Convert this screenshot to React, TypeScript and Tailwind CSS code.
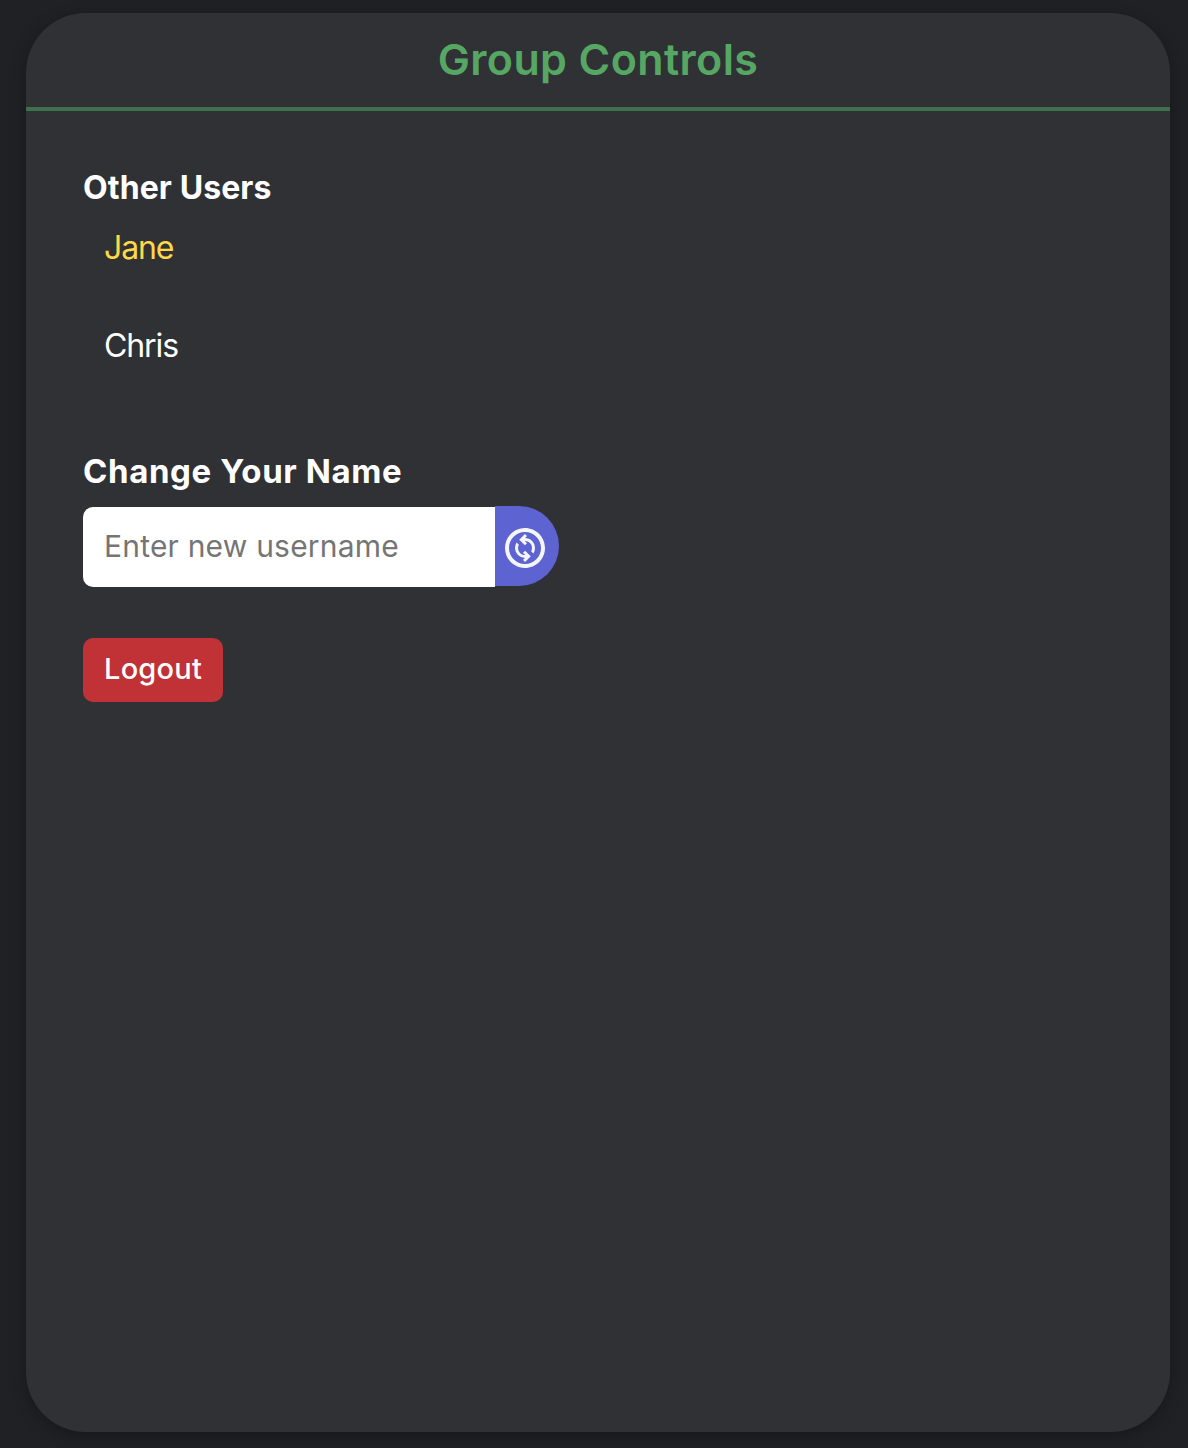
import { MdOutlineChangeCircle } from "react-icons/md";

const users = [
  { name: "Jane", color: "text-[#fdd848]" },
  { name: "Chris", color: "text-white" },
];

export default function App() {
  return (
    <div className="h-[1448px] w-full bg-[#202125] pt-[13px] pr-[18px] pb-4 pl-[26px] font-['Inter',sans-serif]">
      <main className="h-full overflow-hidden rounded-[60px] bg-[#303135] shadow-[0_4px_16px_rgba(0,0,0,0.3)]">
        <header className="flex h-[98px] justify-center border-b-4 border-[#3f704b] pt-4">
          <h1 className="h-[60px] text-[43px] leading-[60px] font-semibold tracking-[0.4px] whitespace-nowrap text-[#56a764]">Group Controls</h1>
        </header>
        <div className="pt-[53px] pl-[57px]">
          <h2 className="h-12 text-[32px] leading-[48px] font-bold tracking-[0.1px] whitespace-nowrap text-white">Other Users</h2>
          <ul className="pl-[21px]">
            {users.map((user) => (
              <li key={user.name} className={`h-[98px] text-[32px] leading-[72px] tracking-[-1.1px] ${user.color}`}>
                {user.name}
              </li>
            ))}
          </ul>
          <h2 className="mt-[39px] h-12 text-[33px] leading-[48px] font-bold tracking-[0.6px] whitespace-nowrap text-white">Change Your Name</h2>
          <form className="mt-[11px] flex" onSubmit={(e) => e.preventDefault()}>
            <input
              className="mt-px h-20 w-[412px] rounded-l-[10px] bg-white px-[21px] pb-0.5 text-[30px] tracking-[0.2px] text-black outline-none placeholder:text-[#757575]"
              placeholder="Enter new username"
            />
            <button aria-label="Change name" className="flex h-20 w-16 rounded-r-[40px] bg-[#5d63d1] pt-[18px] pl-[6px] text-[#f5f5fc]">
              <MdOutlineChangeCircle size={48} />
            </button>
          </form>
          <button className="mt-[51px] h-16 w-[140px] rounded-[10px] bg-[#c03235] pb-0.5 text-[29px] font-medium tracking-[0.2px] whitespace-nowrap text-white">
            Logout
          </button>
        </div>
      </main>
    </div>
  );
}
